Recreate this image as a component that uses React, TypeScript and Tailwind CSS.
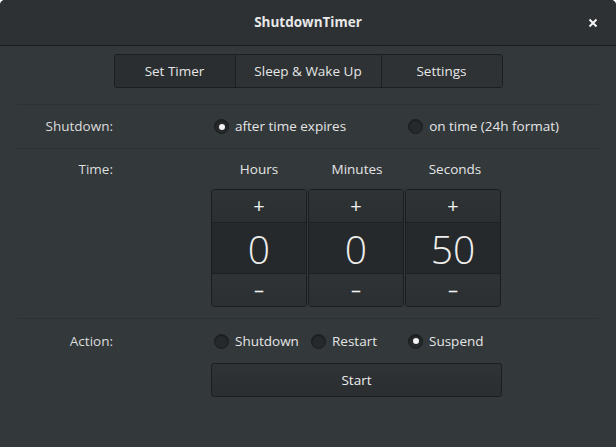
import React from "react";

const font = { fontFamily: '"Open Sans", "Noto Sans", sans-serif' };

function Radio({ checked, label }: { checked?: boolean; label: string }) {
  return (
    <div className="flex items-center gap-[6px]">
      <span className="w-[15px] h-[15px] rounded-full bg-[#25292b] border border-[#1a1d1e] flex items-center justify-center shadow-[inset_0_1px_1px_rgba(0,0,0,0.3)]">
        {checked && <span className="w-[6px] h-[6px] rounded-full bg-[#f2f2f2]" />}
      </span>
      <span className="text-[#e4e5e5]">{label}</span>
    </div>
  );
}

function Spin({ value }: { value: string }) {
  return (
    <div className="w-[96px] flex flex-col rounded-[3px] border border-[#1b1e1f] overflow-hidden">
      <div className="h-[33px] flex items-center justify-center bg-gradient-to-b from-[#2e3335] to-[#2b2f31] border-b border-[#1e2123] text-[#f2f2f2] text-[20px] leading-none">+</div>
      <div className="h-[50px] flex items-center justify-center bg-[#25292b] text-[#eeeeec] text-[39px] font-light leading-none">{value}</div>
      <div className="h-[33px] flex items-center justify-center bg-gradient-to-b from-[#2e3335] to-[#2b2f31] border-t border-[#1e2123] text-[#f2f2f2] text-[20px] leading-none">–</div>
    </div>
  );
}

export default function App() {
  return (
    <div className="w-[616px] h-[447px] bg-[#33383b] text-[13.5px] text-[#e4e5e5] overflow-hidden rounded-t-[5px]" style={font}>
      <div className="relative h-[46px] flex items-center justify-center bg-[#2d3134] border-b border-[#1a1c1e]">
        <span className="font-bold text-[13.5px] text-[#e8e8e8]">ShutdownTimer</span>
        <svg className="absolute left-[588px] top-[18px]" width="10" height="10" viewBox="0 0 10 10">
          <path d="M1.5 1.5 L8.5 8.5 M8.5 1.5 L1.5 8.5" stroke="#f4f4f4" strokeWidth="2" strokeLinecap="butt" />
        </svg>
      </div>
      <div className="flex justify-center pt-[8px]">
        <div className="flex h-[34px] rounded-[3px] border border-[#1c1f20] overflow-hidden">
          <div className="w-[120px] flex items-center justify-center bg-[#2a2e30] text-[#e6e6e6]">Set Timer</div>
          <div className="w-[146px] flex items-center justify-center bg-[#2e3234] border-l border-[#1c1f20] text-[#e6e6e6]">Sleep &amp; Wake Up</div>
          <div className="w-[121px] flex items-center justify-center bg-[#2e3234] border-l border-[#1c1f20] text-[#e6e6e6]">Settings</div>
        </div>
      </div>
      <div className="mx-[17px] mt-[16px] h-px bg-[#2d3134]" />
      <div className="h-[43px] flex items-center">
        <div className="w-[113px] text-right text-[#dcdddd]">Shutdown:</div>
        <div className="ml-[101px] flex items-center gap-[62px]">
          <Radio checked label="after time expires" />
          <Radio label="on time (24h format)" />
        </div>
      </div>
      <div className="mx-[17px] h-px bg-[#2d3134]" />
      <div className="h-[40px] flex items-center">
        <div className="w-[113px] text-right text-[#dcdddd]">Time:</div>
        <div className="ml-[98px] flex gap-[2px]">
          <div className="w-[96px] text-center">Hours</div>
          <div className="w-[96px] text-center">Minutes</div>
          <div className="w-[96px] text-center">Seconds</div>
        </div>
      </div>
      <div className="flex pl-[211px] gap-[1px]">
        <Spin value="0" />
        <Spin value="0" />
        <Spin value="50" />
      </div>
      <div className="mx-[17px] mt-[11px] h-px bg-[#2d3134]" />
      <div className="h-[44px] flex items-center">
        <div className="w-[113px] text-right text-[#dcdddd]">Action:</div>
        <div className="ml-[101px] flex items-center">
          <div className="w-[97px]"><Radio label="Shutdown" /></div>
          <div className="w-[97px]"><Radio label="Restart" /></div>
          <Radio checked label="Suspend" />
        </div>
      </div>
      <div className="pl-[211px]">
        <div className="w-[291px] h-[34px] flex items-center justify-center rounded-[3px] border border-[#1b1e1f] bg-gradient-to-b from-[#2f3336] to-[#2a2e30] text-[#eeeeec]">Start</div>
      </div>
    </div>
  );
}
